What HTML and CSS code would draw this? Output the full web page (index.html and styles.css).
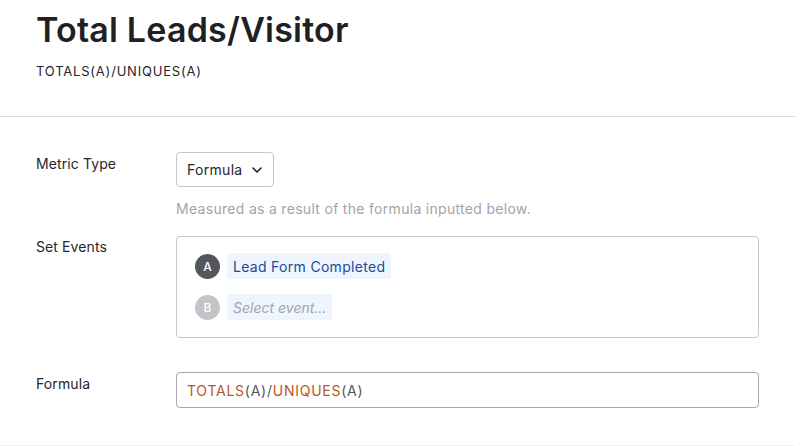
FILE: index.html
```html
<!DOCTYPE html>
<html>
<head>
<meta charset="utf-8">
<link rel="stylesheet" href="styles.css">
</head>
<body>
<div class="page">
  <header class="head">
    <h1 class="title">Total Leads/Visitor</h1>
    <div class="sub">TOTALS(A)/UNIQUES(A)</div>
  </header>
  <section class="form">
    <div class="row row-type">
      <div class="label">Metric Type</div>
      <div class="field">
        <div class="select">Formula
          <svg class="chev" width="10" height="6" viewBox="0 0 10 6"><path d="M1 1 L5 5 L9 1" fill="none" stroke="#26262b" stroke-width="1.6" stroke-linecap="round" stroke-linejoin="round"/></svg>
        </div>
        <div class="help">Measured as a result of the formula inputted below.</div>
      </div>
    </div>
    <div class="row row-events">
      <div class="label">Set Events</div>
      <div class="field">
        <div class="events">
          <div class="ev">
            <span class="dot dot-a">A</span>
            <span class="tag">Lead Form Completed</span>
          </div>
          <div class="ev">
            <span class="dot dot-b">B</span>
            <span class="tag tag-ph">Select event...</span>
          </div>
        </div>
      </div>
    </div>
    <div class="row row-formula">
      <div class="label">Formula</div>
      <div class="field">
        <div class="input"><span class="fn">TOTALS</span>(A)/<span class="fn">UNIQUES</span>(A)</div>
      </div>
    </div>
  </section>
</div>
</body>
</html>
```
FILE: styles.css
```css
* { box-sizing: border-box; }
html, body { margin: 0; padding: 0; background: #fff; }
body { font-family: "Inter", "Noto Sans", sans-serif; color: #26262b; letter-spacing: 0.3px; }
.page { width: 795px; }
.head { padding: 8px 36px 0 36px; height: 117px; border-bottom: 1px solid #dddde2; }
.title { margin: 0; font-size: 34px; font-weight: 600; line-height: 44px; color: #1f1f24; letter-spacing: 0.2px; }
.sub { margin-top: 10px; font-size: 13px; line-height: 18px; color: #26262b; letter-spacing: 0.8px; }
.form { padding: 35px 36px 0 36px; height: 329px; border-bottom: 1px solid #eef0f5; }
.row { display: flex; }
.label { width: 140px; flex: none; font-size: 14px; line-height: 20px; color: #26262b; letter-spacing: 0.1px; }
.field { flex: 1; }
.row-type .label { padding-top: 2px; }
.select { display: inline-flex; align-items: center; height: 35px; width: 98px; padding: 0 10px; border: 1px solid #c6c6cc; border-radius: 4px; font-size: 14px; color: #26262b; gap: 9px; }
.help { margin-top: 12px; font-size: 14px; line-height: 20px; color: #a3a3ab; }
.row-events { margin-top: 17px; }
.row-events .label { padding-top: 1px; }
.events { height: 102px; border: 1px solid #c6c6cc; border-radius: 4px; padding: 16px 18px; display: flex; flex-direction: column; gap: 15px; }
.ev { display: flex; align-items: center; gap: 7px; height: 26px; }
.dot { width: 25px; height: 25px; border-radius: 50%; display: flex; align-items: center; justify-content: center; font-size: 12px; font-weight: 500; color: #fff; flex: none; letter-spacing: 0; }
.dot-a { background: #55555d; }
.dot-b { background: #c3c3c8; }
.tag { height: 26px; padding: 0 6px; display: flex; align-items: center; background: #eef5ff; border-radius: 3px; font-size: 14px; color: #1d4a96; }
.tag-ph { color: #a3a3ab; font-style: italic; letter-spacing: 0; }
.row-formula { margin-top: 34px; }
.row-formula .label { padding-top: 2px; }
.input { height: 36px; border: 1px solid #a8a8ae; border-radius: 4px; padding: 0 10px; display: flex; align-items: center; font-size: 14px; color: #55555d; letter-spacing: 0.75px; }
.fn { color: #b9581f; }
```
